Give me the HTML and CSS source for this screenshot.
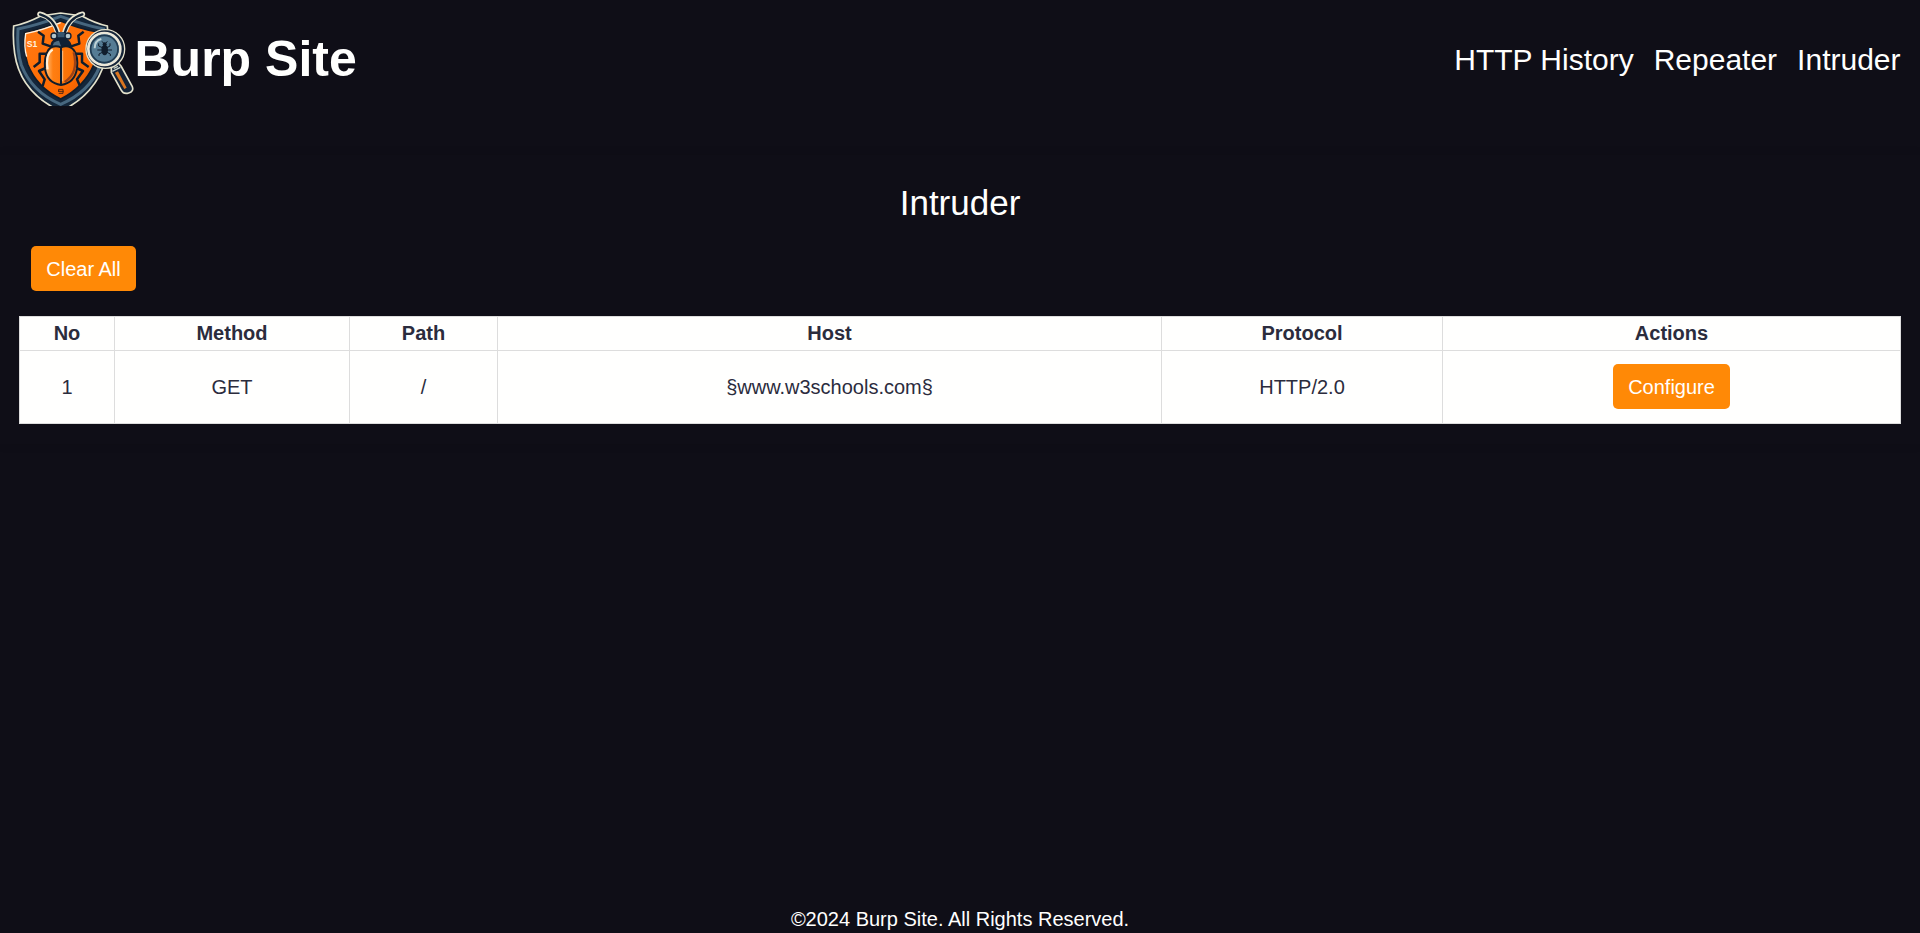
FILE: index.html
```html
<!DOCTYPE html>
<html lang="en">
<head>
<meta charset="utf-8">
<title>Burp Site</title>
<link rel="stylesheet" href="styles.css">
</head>
<body>
<header class="header">
  <div class="brand">
    <svg class="logo" viewBox="30 24 372 294" aria-hidden="true">
      <defs>
        <linearGradient id="shell" x1="0" x2="1" y1="0" y2="0">
          <stop offset="0" stop-color="#ffc98a"/><stop offset=".25" stop-color="#ff7f12"/><stop offset="1" stop-color="#f86a00"/>
        </linearGradient>
        <linearGradient id="field" x1="0" x2="1" y1="0" y2="1">
          <stop offset="0" stop-color="#ff7a14"/><stop offset=".7" stop-color="#ff6a00"/><stop offset="1" stop-color="#c9500a"/>
        </linearGradient>
      </defs>
      <!-- shield -->
      <path d="M41 78Q80 70 122 48L182 39L246 48Q285 70 322 78Q326 120 320 160Q300 276 182 334Q60 276 44 160Q38 120 41 78Z" fill="#14263a" stroke="#e4e2cc" stroke-width="5"/>
      <path d="M54 87Q110 76 182 49Q255 76 311 87Q318 148 299 200Q268 276 182 313Q95 276 64 195Q50 150 54 87Z" fill="none" stroke="#47677f" stroke-width="9"/>
      <path d="M73 97Q130 87 182 63Q236 86 292 96Q298 150 282 193Q252 262 182 297Q110 262 83 193Q70 150 73 97Z" fill="url(#field)" stroke="#111d2b" stroke-width="5"/>
      <path d="M80 170Q71 140 77 101Q130 90 182 68" fill="none" stroke="#fff0dc" stroke-width="4"/>
      <text class="logo-mark" x="80" y="140">S1</text>
      <path d="M176 274V268H189V280H176M174 274H191" fill="none" stroke="#4e2715" stroke-width="3"/>
      <!-- beetle legs and antennae -->
      <g fill="none" stroke="#101d2c" stroke-width="7.5" stroke-linejoin="round">
        <path d="M154 140L128 131L131 107L114 95M139 161H119V187L101 201M137 204L117 213L134 238L128 258"/>
        <path d="M211 140L238 131L235 107L251 95M226 161H246V187L266 201M229 204L249 213L231 238L240 258"/>
      </g>
      <g fill="none" stroke-linecap="round">
        <path d="M173 97Q160 52 119 42M194 97Q207 52 248 42" stroke="#e9e5d1" stroke-width="15"/>
        <path d="M173 99Q160 54 120 43M194 99Q207 54 247 43" stroke="#102033" stroke-width="7"/>
      </g>
      <!-- beetle body -->
      <path d="M151 142Q150 123 168 115L172 97H195L198 115Q215 124 216 143Z" fill="#102034"/>
      <path d="M166 105Q183 86 200 105L195 112H172Z" fill="#36566f"/>
      <circle cx="162" cy="108" r="9" fill="#b2c6cc" stroke="#102034" stroke-width="4"/>
      <circle cx="204" cy="108" r="9" fill="#b2c6cc" stroke="#102034" stroke-width="4"/>
      <path d="M158 137Q160 124 177 122L184 142Z" fill="#4d6c81"/>
      <path d="M183 142Q207 133 222 151Q235 169 231 206Q224 249 183 255Q141 249 135 206Q132 170 145 150Q159 133 183 142Z" fill="url(#shell)" stroke="#101d2c" stroke-width="6"/>
      <path d="M143 208Q135 163 158 149" fill="none" stroke="#fff3dc" stroke-width="6"/>
      <path d="M221 157Q237 219 194 246" fill="none" stroke="#9f4318" stroke-width="7"/>
      <path d="M183 143V255" stroke="#101d2c" stroke-width="6"/>
      <path d="M188 152V244" stroke="#f4c18d" stroke-width="3"/>
      <!-- magnifier -->
      <path d="M334 190L352 185L363 198L397 260Q402 274 386 279Q371 284 364 271L334 217Z" fill="#142337" stroke="#e4e2cc" stroke-width="5" stroke-linejoin="round"/>
      <path d="M341 205L354 199M337 214L361 202" stroke="#c7d1c9" stroke-width="4"/>
      <path d="M345 218L373 267L380 263L354 214Z" fill="#db7620"/>
      <circle cx="316" cy="147" r="58" fill="#142337" stroke="#e4e2cc" stroke-width="4"/>
      <circle cx="313" cy="147" r="48" fill="#557c94" stroke="#ece8d9" stroke-width="8"/>
      <circle cx="313" cy="147" r="41" fill="none" stroke="#203b51" stroke-width="5"/>
      <path d="M284 145Q284 122 304 117" fill="none" stroke="#bdd2d7" stroke-width="6"/>
      <ellipse cx="314" cy="150" rx="10" ry="16" fill="#101d2c"/>
      <circle cx="314" cy="133" r="6" fill="#101d2c"/>
      <path d="M307 143L296 138V130M305 150H292M307 157L297 162V168M321 143L330 138V130M323 150H336M321 157L331 162V168M311 130L306 124M317 130L322 124" fill="none" stroke="#101d2c" stroke-width="3"/>
    </svg>
    <h1 class="brand-name">Burp Site</h1>
  </div>
  <nav class="nav">
    <a class="nav-link">HTTP History</a>
    <a class="nav-link">Repeater</a>
    <a class="nav-link">Intruder</a>
  </nav>
</header>
<main class="panel">
  <h2 class="panel-title">Intruder</h2>
  <button class="button button-clear">Clear All</button>
  <table class="requests">
    <colgroup><col class="col-no"><col class="col-method"><col class="col-path"><col class="col-host"><col class="col-protocol"><col class="col-actions"></colgroup>
    <thead>
      <tr><th>No</th><th>Method</th><th>Path</th><th>Host</th><th>Protocol</th><th>Actions</th></tr>
    </thead>
    <tbody>
      <tr><td>1</td><td>GET</td><td>/</td><td>§www.w3schools.com§</td><td>HTTP/2.0</td><td><button class="button button-configure">Configure</button></td></tr>
    </tbody>
  </table>
</main>
<footer class="footer">©2024 Burp Site. All Rights Reserved.</footer>
</body>
</html>
```

FILE: styles.css
```css
* { box-sizing: border-box; }

body {
  margin: 0;
  height: 100vh;
  display: flex;
  flex-direction: column;
  background: #0f0e17;
  color: #fffffe;
  font-family: "Liberation Sans", Arial, sans-serif;
  font-size: 20px;
  line-height: 23px;
  overflow: hidden;
}

.header {
  height: 155px;
  padding: 8px 19.5px 0 10px;
  display: flex;
  justify-content: space-between;
  align-items: flex-start;
}

.brand { display: flex; align-items: flex-start; }
.logo { display: block; width: 124px; height: 98px; }
.logo-mark { font: bold 26px "Liberation Sans", Arial, sans-serif; fill: #fff0dc; }
.brand-name { margin: 23px 0 0 0.5px; font-size: 50px; line-height: 57px; }

.nav { display: flex; gap: 20px; margin-top: 34px; }
.nav-link { font-size: 30px; line-height: 35px; color: #fffffe; }

.panel {
  height: 289px;
  padding: 28px 19px 19px;
  box-shadow: 0 0 10px rgba(0, 0, 0, 0.1);
}

.panel-title {
  margin: 0 0 23px;
  font-size: 35px;
  line-height: 40px;
  font-weight: 400;
  text-align: center;
}

.button {
  height: 45px;
  padding: 2px 0 0;
  border: 0;
  border-radius: 5px;
  background: #ff8906;
  color: #fffffe;
  font: inherit;
}

.button-clear { display: block; width: 105px; margin: 0 0 25px 12px; }
.button-configure { display: block; width: 117px; margin: 0 auto 2px; }

.requests {
  width: 1882px;
  table-layout: fixed;
  border-collapse: collapse;
  background: #fffffe;
  color: #2b2c3d;
  text-align: center;
}

.requests th, .requests td { padding: 0; border: 1px solid #dddddd; }
.requests th { height: 34px; }
.requests td { height: 73px; }

.col-no { width: 95px; }
.col-method { width: 235px; }
.col-path { width: 148px; }
.col-host { width: 664px; }
.col-protocol { width: 281px; }
.col-actions { width: 458px; }

.footer { margin-top: auto; padding-bottom: 2px; text-align: center; }
```
